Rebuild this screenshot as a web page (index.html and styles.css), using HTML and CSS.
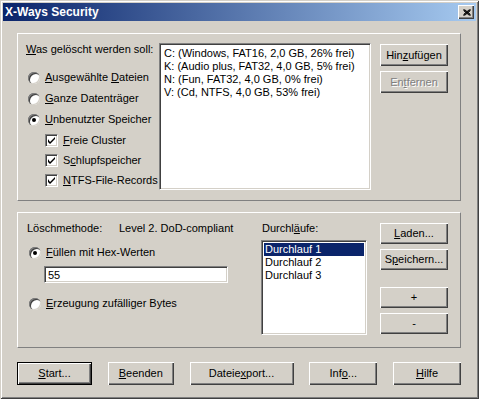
FILE: index.html
```html
<!DOCTYPE html>
<html lang="de">

<head>
    <meta charset="UTF-8">
    <title>X-Ways Security</title>
    <link rel="stylesheet" href="styles.css">
</head>

<body>
    <div class="window">
        <div class="titlebar">
            <span class="title">X-Ways Security</span>
            <span class="close">
                <svg width="8" height="7" viewBox="0 0 8 7">
                    <path d="M0.5 0.5 L7.5 6.5 M1.5 0.5 L7.5 5.5 M0.5 1.5 L6.5 6.5 M7.5 0.5 L0.5 6.5 M6.5 0.5 L0.5 5.5 M7.5 1.5 L1.5 6.5" stroke="#000" stroke-width="1" fill="none" />
                </svg>
            </span>
        </div>

        <div class="client">
            <!-- Was gelöscht werden soll -->
            <div class="group group-target">
                <div class="col-options">
                    <div class="label"><u>W</u>as gelöscht werden soll:</div>
                    <div class="radio-row first"><span class="radio"></span><span><u>A</u>usgewählte <u>D</u>ateien</span></div>
                    <div class="radio-row"><span class="radio"></span><span><u>G</u>anze Datenträger</span></div>
                    <div class="radio-row"><span class="radio checked"></span><span><u>U</u>nbenutzter Speicher</span></div>
                    <div class="check-row"><span class="check"><svg width="7" height="7" viewBox="0 0 7 7"><path d="M0 2 V5 L2 7 L7 2 V0 L2 5 Z" fill="#000" /></svg></span><span><u>F</u>reie Cluster</span></div>
                    <div class="check-row"><span class="check"><svg width="7" height="7" viewBox="0 0 7 7"><path d="M0 2 V5 L2 7 L7 2 V0 L2 5 Z" fill="#000" /></svg></span><span>S<u>c</u>hlupfspeicher</span></div>
                    <div class="check-row"><span class="check"><svg width="7" height="7" viewBox="0 0 7 7"><path d="M0 2 V5 L2 7 L7 2 V0 L2 5 Z" fill="#000" /></svg></span><span><u>N</u>TFS-File-Records</span></div>
                </div>
                <div class="listbox drives">
                    <div class="item">C: (Windows, FAT16, 2,0 GB, 26% frei)</div>
                    <div class="item">K: (Audio plus, FAT32, 4,0 GB, 5% frei)</div>
                    <div class="item">N: (Fun, FAT32, 4,0 GB, 0% frei)</div>
                    <div class="item">V: (Cd, NTFS, 4,0 GB, 53% frei)</div>
                </div>
                <div class="col-buttons">
                    <div class="btn">Hin<u>z</u>ufügen</div>
                    <div class="btn disabled">En<u>t</u>fernen</div>
                </div>
            </div>

            <!-- Löschmethode -->
            <div class="group group-method">
                <div class="col-method">
                    <div class="label method-line"><span class="method-name">Löschmethode:</span><span>Level 2. DoD-compliant</span></div>
                    <div class="radio-row fill"><span class="radio checked"></span><span><u>F</u>üllen mit Hex-Werten</span></div>
                    <div class="textbox">55</div>
                    <div class="radio-row random"><span class="radio"></span><span><u>E</u>rzeugung zufälliger Bytes</span></div>
                </div>
                <div class="col-passes">
                    <div class="label">Durchl<u>ä</u>ufe:</div>
                    <div class="listbox passes">
                        <div class="item selected">Durchlauf 1</div>
                        <div class="item">Durchlauf 2</div>
                        <div class="item">Durchlauf 3</div>
                    </div>
                </div>
                <div class="col-buttons method-buttons">
                    <div class="btn"><u>L</u>aden...</div>
                    <div class="btn">S<u>p</u>eichern...</div>
                    <div class="btn plus">+</div>
                    <div class="btn">-</div>
                </div>
            </div>

            <div class="footer">
                <div class="btn default start"><u>S</u>tart...</div>
                <div class="btn beenden"><u>B</u>eenden</div>
                <div class="btn export">Dateie<u>x</u>port...</div>
                <div class="btn info">Inf<u>o</u>...</div>
                <div class="btn hilfe"><u>H</u>ilfe</div>
            </div>
        </div>
    </div>
</body>

</html>
```

FILE: styles.css
```css
body {
    margin: 0;
    padding: 0;
    font-family: 'Liberation Sans', Arial, sans-serif;
    font-size: 11px;
    line-height: 13px;
    color: #000;
    background-color: #d4d0c8;
}

u {
    text-decoration: underline;
    text-underline-offset: 1px;
}

.window {
    width: 479px;
    height: 399px;
    box-sizing: border-box;
    padding: 3px;
    background-color: #d4d0c8;
    box-shadow: inset 1px 1px #d4d0c8, inset -1px -1px #404040, inset 2px 2px #fff, inset -2px -2px #808080;
}

.titlebar {
    height: 18px;
    display: flex;
    align-items: center;
    justify-content: space-between;
    padding: 0 2px;
    background: linear-gradient(to right, #0a246a, #a6caf0);
}

.title {
    color: #fff;
    font-weight: bold;
    font-size: 12px;
}

.close {
    width: 16px;
    height: 14px;
    box-sizing: border-box;
    display: flex;
    align-items: center;
    justify-content: center;
    padding-left: 1px;
    background-color: #d4d0c8;
    box-shadow: inset 1px 1px #fff, inset -1px -1px #404040, inset -2px -2px #808080;
}

.close svg {
    display: block;
}

.client {
    padding: 12px 0 0 14px;
}

.group {
    width: 444px;
    box-sizing: border-box;
    display: flex;
    border: 1px solid;
    border-color: #fff #808080 #808080 #fff;
}

.group-target {
    height: 168px;
    padding: 9px 0 0 8px;
}

.group-method {
    height: 136px;
    margin-top: 11px;
    padding: 9px 0 0 9px;
}

.col-options {
    width: 133px;
}

.radio-row,
.check-row {
    display: flex;
    align-items: center;
    white-space: nowrap;
}

.radio-row {
    height: 21px;
    padding-left: 2px;
}

.radio-row.first {
    margin-top: 11px;
}

.check-row {
    height: 20px;
    padding-left: 19px;
}

.radio {
    width: 12px;
    height: 12px;
    flex-shrink: 0;
    margin-right: 5px;
    border-radius: 50%;
    background-color: #fff;
    box-shadow: inset 1px 1px #808080, inset 2px 2px #404040, inset -1px -1px #d4d0c8, 0 0 0 0 #fff;
    display: flex;
    align-items: center;
    justify-content: center;
}

.radio.checked::after {
    content: "";
    width: 4px;
    height: 4px;
    border-radius: 50%;
    background-color: #000;
}

.check {
    width: 13px;
    height: 13px;
    box-sizing: border-box;
    flex-shrink: 0;
    margin-right: 5px;
    background-color: #fff;
    border: 1px solid;
    border-color: #808080 #fff #fff #808080;
    box-shadow: inset 1px 1px #404040, inset -1px -1px #d4d0c8;
    display: flex;
    align-items: center;
    justify-content: center;
}

.check svg {
    display: block;
}

.listbox {
    box-sizing: border-box;
    background-color: #fff;
    border: 1px solid;
    border-color: #808080 #fff #fff #808080;
    box-shadow: inset 1px 1px #404040, inset -1px -1px #d4d0c8;
    padding: 2px;
}

.item {
    height: 13px;
    padding-left: 1px;
    white-space: nowrap;
}

.drives {
    width: 212px;
    height: 147px;
    padding-top: 3px;
}

.drives .item {
    padding-left: 2px;
}

.col-buttons {
    display: flex;
    flex-direction: column;
    margin-left: 9px;
    padding-top: 1px;
}

.btn {
    width: 68px;
    height: 22px;
    box-sizing: border-box;
    display: flex;
    align-items: center;
    justify-content: center;
    white-space: nowrap;
    background-color: #d4d0c8;
    box-shadow: inset 1px 1px #fff, inset -1px -1px #404040, inset -2px -2px #808080;
}

.btn + .btn {
    margin-top: 5px;
}

.btn.disabled {
    color: #808080;
    text-shadow: 1px 1px 0 #fff;
}

.col-method {
    width: 234px;
}

.method-line {
    display: flex;
}

.method-name {
    width: 92px;
}

.radio-row.fill {
    margin-top: 7px;
}

.textbox {
    width: 184px;
    height: 17px;
    box-sizing: border-box;
    margin: 3px 0 0 17px;
    padding: 2px 0 0 3px;
    line-height: 12px;
    background-color: #fff;
    border: 1px solid;
    border-color: #808080 #fff #fff #808080;
    box-shadow: inset 1px 1px #404040, inset -1px -1px #d4d0c8;
}

.radio-row.random {
    margin-top: 10px;
}

.col-passes .label {
    padding-left: 1px;
}

.passes {
    width: 106px;
    height: 95px;
    margin-top: 5px;
}

.item.selected {
    background-color: #0a246a;
    color: #fff;
}

.method-buttons {
    margin-left: 13px;
}

.method-buttons .btn {
    height: 21px;
}

.method-buttons .btn.plus {
    margin-top: 17px;
}

.footer {
    width: 444px;
    display: flex;
    justify-content: space-between;
    margin-top: 14px;
}

.footer .btn {
    height: 23px;
    margin-top: 0;
}

.btn.default {
    border: 1px solid #000;
}

.start { width: 75px; }
.beenden { width: 66px; }
.export { width: 104px; }
.info { width: 68px; }
.hilfe { width: 68px; }
```
